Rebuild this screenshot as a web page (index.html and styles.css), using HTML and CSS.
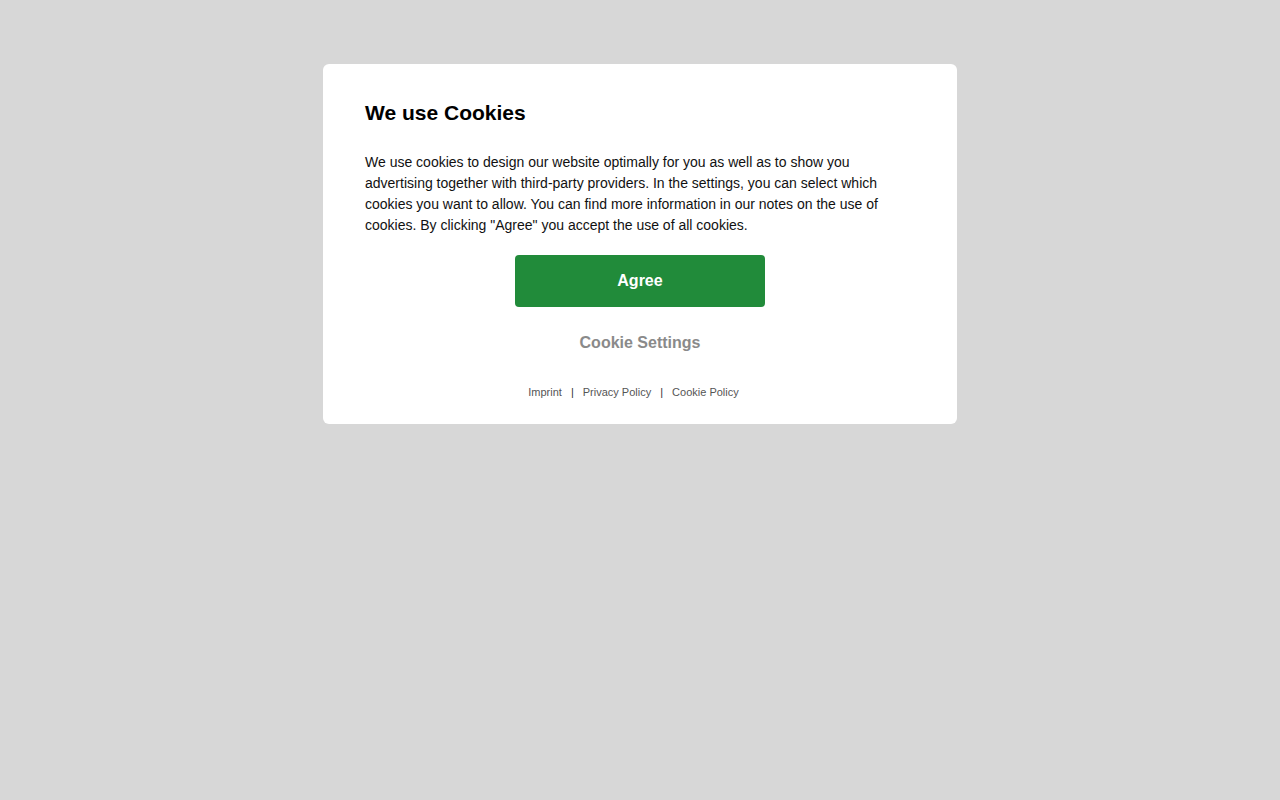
FILE: index.html
```html
<!DOCTYPE html>
<html lang="en">
<head>
<meta charset="utf-8">
<title>We use Cookies</title>
<link rel="stylesheet" href="styles.css">
</head>
<body>
<div class="overlay">
  <div class="card">
    <h2 class="title">We use Cookies</h2>
    <p class="text">We use cookies to design our website optimally for you as well as to show you advertising together with third-party providers. In the settings, you can select which cookies you want to allow. You can find more information in our notes on the use of cookies. By clicking "Agree" you accept the use of all cookies.</p>
    <div class="actions">
      <button class="agree">Agree</button>
      <button class="settings">Cookie Settings</button>
    </div>
    <div class="links">
      <a href="#">Imprint</a>
      <span class="sep">|</span>
      <a href="#">Privacy Policy</a>
      <span class="sep">|</span>
      <a href="#">Cookie Policy</a>
    </div>
  </div>
</div>
</body>
</html>
```

FILE: styles.css
```css
html, body {
  margin: 0;
  padding: 0;
  background: #d7d7d7;
  font-family: "Liberation Sans", Arial, sans-serif;
}
.overlay {
  display: flex;
  justify-content: center;
  align-items: flex-start;
  padding-top: 64px;
}
.card {
  width: 634px;
  box-sizing: border-box;
  background: #ffffff;
  border-radius: 6px;
  padding: 37px 42px 25px;
}
.title {
  margin: 0;
  font-size: 21px;
  line-height: 24px;
  font-weight: bold;
  color: #000;
}
.text {
  margin: 27px 0 0;
  font-size: 14px;
  line-height: 21px;
  color: #111;
}
.actions {
  display: flex;
  flex-direction: column;
  align-items: center;
  margin-top: 19px;
}
.agree {
  width: 250px;
  height: 52px;
  border: none;
  border-radius: 4px;
  background: #218b3a;
  color: #fff;
  font-family: inherit;
  font-size: 16px;
  font-weight: bold;
  cursor: pointer;
}
.settings {
  margin-top: 27px;
  border: none;
  background: none;
  padding: 0;
  color: #8a8a8a;
  font-family: inherit;
  font-size: 16px;
  line-height: 18px;
  font-weight: bold;
  cursor: pointer;
}
.links {
  display: flex;
  justify-content: center;
  gap: 9px;
  margin-top: 34px;
  padding-right: 13px;
  font-size: 11px;
  line-height: 13px;
}
.links a {
  color: #555;
  text-decoration: none;
}
.sep {
  color: #333;
}
```
